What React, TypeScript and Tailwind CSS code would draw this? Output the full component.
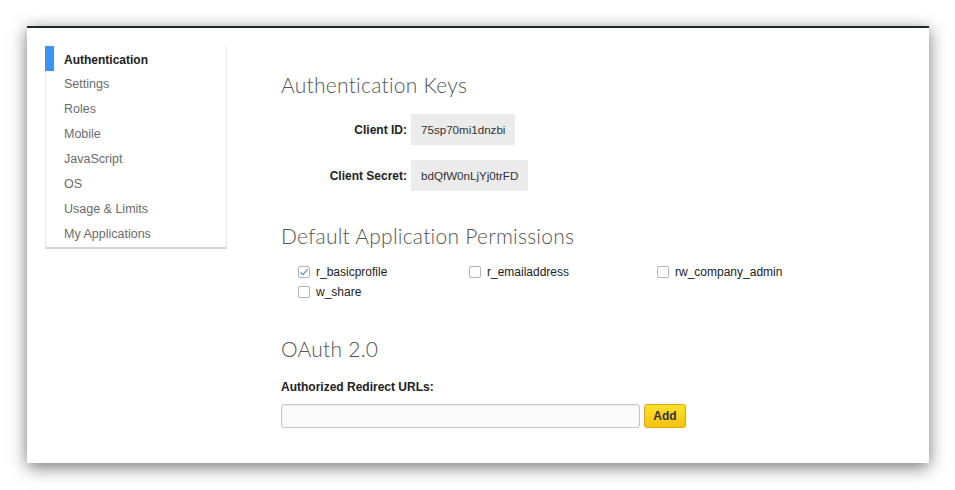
import { useState } from "react";

const navItems = [
    "Authentication",
    "Settings",
    "Roles",
    "Mobile",
    "JavaScript",
    "OS",
    "Usage & Limits",
    "My Applications",
];

const permissions = [
    { name: "r_basicprofile", checked: true, width: "w-[171px]" },
    { name: "r_emailaddress", checked: false, width: "w-[188px]" },
    { name: "rw_company_admin", checked: false, width: "w-[188px]" },
    { name: "w_share", checked: false, width: "w-[171px]" },
];

const Checkbox = ({ checked }: { checked: boolean }) => (
    <span className="w-[12px] h-[12px] rounded-[2px] border border-[#b4b4b4] bg-white flex items-center justify-center shrink-0">
        {checked && (
            <svg width="10" height="10" viewBox="0 0 10 10">
                <path d="M1.5 5.2 L4 7.6 L8.6 2.2" fill="none" stroke="#6d8aa8" strokeWidth="1.2" />
            </svg>
        )}
    </span>
);

const Sidebar = () => (
    <div className="w-[182px] shrink-0 self-start pt-[1px] border-l border-r border-[#e6e6e6] border-b-2 border-b-[#d4d4d4]">
        {navItems.map((item, i) => (
            <div key={item} className="relative h-[25px] flex items-center pl-[18px]">
                {i === 0 && <span className="absolute left-[-1px] top-[-1px] w-[9px] h-[25px] bg-[#3b94f5]"></span>}
                <span className={i === 0 ? "font-bold text-[#222]" : "text-[12.5px] text-[#6b6b6b]"}>{item}</span>
            </div>
        ))}
    </div>
);

const Heading = ({ children }: { children: React.ReactNode }) => (
    <h2 className="font-['Lato'] font-light text-[21px] leading-[28px] text-[#555] tracking-[0.25px]">{children}</h2>
);

const KeyRow = ({ label, value }: { label: string; value: string }) => (
    <div className="flex items-center">
        <div className="w-[126px] text-right font-bold text-[#222]">{label}</div>
        <div className="ml-[4px] h-[31px] flex items-center px-[10px] bg-[#ebebeb] text-[11.6px] text-[#333]">{value}</div>
    </div>
);

export default function App() {
    const [url, setUrl] = useState("");

    return (
        <div className="w-[955px] h-[490px] bg-white pt-[26px] pl-[27px] font-['Liberation_Sans',Arial,sans-serif] text-[12px]">
            <div className="w-[902px] h-[437px] bg-white border-t-2 border-[#1e2b28] shadow-[0_4px_16px_rgba(0,0,0,0.55)] flex pt-[18px] pl-[18px]">
                <Sidebar />
                <div className="ml-[54px] pt-[25px] flex flex-col">
                    <Heading>Authentication Keys</Heading>
                    <div className="mt-[15px] flex flex-col gap-[15px]">
                        <KeyRow label="Client ID:" value="75sp70mi1dnzbi" />
                        <KeyRow label="Client Secret:" value="bdQfW0nLjYj0trFD" />
                    </div>

                    <div className="mt-[31px]">
                        <Heading>Default Application Permissions</Heading>
                    </div>
                    <div className="mt-[12px] ml-[17px] flex flex-wrap w-[560px]">
                        {permissions.map((p) => (
                            <label key={p.name} className={`${p.width} h-[20px] flex items-center gap-[6px] text-[12px] text-[#222]`}>
                                <Checkbox checked={p.checked} />
                                <span>{p.name}</span>
                            </label>
                        ))}
                    </div>

                    <div className="mt-[33px]">
                        <Heading>OAuth 2.0</Heading>
                    </div>
                    <div className="mt-[16px] font-bold text-[#222] leading-[16px]">Authorized Redirect URLs:</div>
                    <div className="mt-[9px] flex items-center gap-[4px]">
                        <input
                            value={url}
                            onChange={(e) => setUrl(e.target.value)}
                            className="w-[359px] h-[24px] rounded-[3px] border border-[#c6c6c6] bg-[#fafafa] shadow-[inset_0_1px_2px_rgba(0,0,0,0.06)] px-2 outline-none"
                        />
                        <button className="w-[42px] h-[24px] rounded-[3px] border border-[#e2a90c] bg-[linear-gradient(#fbe02e,#f4c20f)] font-bold text-[12px] text-[#333]">
                            Add
                        </button>
                    </div>
                </div>
            </div>
        </div>
    );
}
